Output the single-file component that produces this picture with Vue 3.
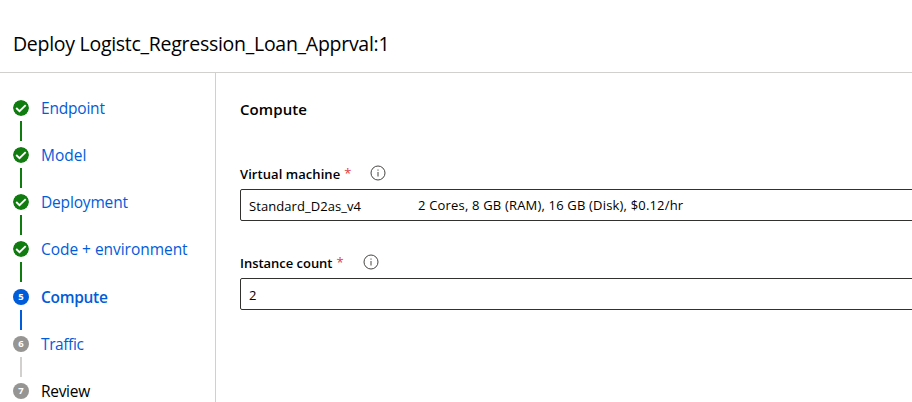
<script setup>
const steps = [
  { n: 1, label: 'Endpoint', state: 'done', width: 'w-endpoint' },
  { n: 2, label: 'Model', state: 'done', width: 'w-model' },
  { n: 3, label: 'Deployment', state: 'done', width: 'w-deployment' },
  { n: 4, label: 'Code + environment', state: 'done', width: 'w-code' },
  { n: 5, label: 'Compute', state: 'current', width: 'w-compute' },
  { n: 6, label: 'Traffic', state: 'upcoming', width: 'w-traffic' },
  { n: 7, label: 'Review', state: 'upcoming last', width: 'w-review' },
]
</script>

<template>
  <div class="page">
    <header class="header"><h1>Deploy Logistc_Regression_Loan_Apprval:1</h1></header>
    <div class="body">
      <nav class="steps">
        <div v-for="s in steps" :key="s.n" class="step" :class="s.state">
          <div class="rail">
            <svg v-if="s.state === 'done'" class="dot" viewBox="0 0 16 16">
              <circle cx="8" cy="8" r="8" fill="#107c10" />
              <path d="M3.2 8 6.5 11.1 12.7 5.1" fill="none" stroke="#fff" stroke-width="1.9" />
            </svg>
            <span v-else class="dot num">{{ s.n }}</span>
            <span v-if="s.n < 7" class="line"></span>
          </div>
          <span class="label" :class="s.width">{{ s.label }}</span>
        </div>
      </nav>
      <main class="content">
        <h2>Compute</h2>
        <div class="field">
          <div class="caption">
            <span class="name vm">Virtual machine</span><span class="req">*</span>
            <svg class="info" viewBox="0 0 16 16">
              <circle cx="8" cy="8" r="7" fill="none" stroke="#484644" />
              <path d="M8 7v4.5M8 4.5v1.2" stroke="#484644" />
            </svg>
          </div>
          <div class="box">
            <span class="sku">Standard_D2as_v4</span>
            <span class="spec">2 Cores, 8 GB (RAM), 16 GB (Disk), $0.12/hr</span>
          </div>
        </div>
        <div class="field">
          <div class="caption">
            <span class="name ic">Instance count</span><span class="req">*</span>
            <svg class="info" viewBox="0 0 16 16">
              <circle cx="8" cy="8" r="7" fill="none" stroke="#484644" />
              <path d="M8 7v4.5M8 4.5v1.2" stroke="#484644" />
            </svg>
          </div>
          <div class="box"><span class="count">2</span></div>
        </div>
      </main>
    </div>
  </div>
</template>

<style>
body { margin: 0; background: #fff; }
</style>

<style scoped>
.page {
  box-sizing: border-box;
  width: 912px;
  height: 402px;
  overflow: hidden;
  display: flex;
  flex-direction: column;
  font-family: "Segoe UI", "Open Sans", "Noto Sans", sans-serif;
  color: #000;
  white-space: nowrap;
}
.header {
  box-sizing: border-box;
  flex: none;
  height: 73px;
  padding: 16px 0 0 13px;
  border-bottom: 1px solid #d2d0ce;
}
h1, h2 { margin: 0; }
h1 { font-size: 19.5px; font-weight: 400; line-height: 56px; letter-spacing: -0.28px; }
.body { display: flex; flex: 1; min-height: 0; }
.steps {
  box-sizing: border-box;
  flex: none;
  width: 216px;
  padding: 23px 0 0 13px;
  border-right: 1px solid #d2d0ce;
}
.step { display: flex; gap: 12px; height: 47.17px; }
.rail { display: flex; flex-direction: column; align-items: center; width: 16px; padding-top: 4px; }
.dot { display: block; flex: none; width: 16px; height: 16px; border-radius: 50%; }
.num {
  background: #979593;
  color: #fff;
  font-size: 9.5px;
  font-weight: 700;
  line-height: 16px;
  text-align: center;
}
.line { flex: none; width: 2px; height: 20px; margin-top: 5px; background: #d2d0ce; }
.done .line { background: #107c10; }
.current .line, .current .num { background: #015cda; }
.label { font-size: 15.5px; line-height: 25px; color: #015cda; }
.current .label { font-weight: 600; }
.last .label { color: #000; }
.w-endpoint { letter-spacing: -0.2px; }
.w-deployment { letter-spacing: -0.17px; }
.w-code { letter-spacing: -0.04px; }
.w-compute { letter-spacing: -0.3px; }
.w-traffic { letter-spacing: -0.4px; }
.w-review { letter-spacing: -0.3px; }
.content { flex: 1; min-width: 0; padding-left: 24px; }
h2 { margin-top: 24px; font-size: 15px; font-weight: 600; line-height: 24px; letter-spacing: 0.1px; }
.field { height: 89px; }
h2 + .field { margin-top: 42px; }
.caption { display: flex; align-items: center; height: 20px; font-size: 13px; line-height: 20px; }
.name { font-weight: 600; padding-top: 2px; }
.vm { letter-spacing: 0.06px; }
.ic { letter-spacing: -0.03px; }
.req { margin-left: 4px; color: #e03a3e; }
.info { width: 16px; height: 16px; margin-left: 19px; }
.box {
  display: flex;
  box-sizing: border-box;
  width: 700px;
  height: 32px;
  margin-top: 6px;
  padding-left: 8px;
  border: 1px solid #323130;
  border-radius: 2px;
  font-size: 13px;
  line-height: 30px;
}
.sku { width: 169px; letter-spacing: 0.07px; padding-top: 1px; }
.spec { letter-spacing: 0.18px; }
.count { padding-top: 1px; }
</style>
